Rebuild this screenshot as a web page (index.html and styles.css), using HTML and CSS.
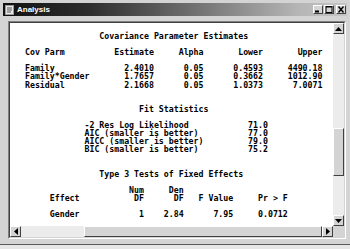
FILE: index.html
```html
<!DOCTYPE html>
<html lang="en">
<head>
  <meta charset="UTF-8" />
  <meta name="viewport" content="width=device-width, initial-scale=1.0" />
  <title>Analysis</title>

  <link rel="stylesheet" href="styles.css">

</head>

<body>
    <div class="window">
        <div class="titlebar">
            <svg class="app-icon" width="9" height="10" viewBox="0 0 9 10">
                <rect x="0.5" y="0.5" width="8" height="9" fill="#e8e8e8" stroke="#9a9a9a"/>
                <path d="M2 3h5M2 5h5M2 7h4" stroke="#555" stroke-width="1"/>
            </svg>
            <span class="title">Analysis</span>
            <div class="controls">
                <span class="ctl"><svg width="8" height="7" viewBox="0 0 8 7"><path d="M1 5.5h4" stroke="#000" stroke-width="2"/></svg></span>
                <span class="ctl"><svg width="8" height="7" viewBox="0 0 8 7"><rect x="1" y="0.5" width="6" height="6" fill="none" stroke="#000"/><path d="M1 1h6" stroke="#000" stroke-width="1"/></svg></span>
                <span class="ctl ctl-close"><svg width="8" height="7" viewBox="0 0 8 7"><path d="M1.5 0.5l5 6M6.5 0.5l-5 6" stroke="#000" stroke-width="1.4"/></svg></span>
            </div>
        </div>

        <div class="frame">
            <div class="well">
                <div class="content">
<pre class="listing">               Covariance Parameter Estimates

Cov Parm          Estimate     Alpha       Lower       Upper

Family              2.4010      0.05      0.4593     4490.18
Family*Gender       1.7657      0.05      0.3662     1012.90
Residual            2.1668      0.05      1.0373      7.0071


                       Fit Statistics

            -2 Res Log Likelihood            71.0
            AIC (smaller is better)          77.0
            AICC (smaller is better)         79.0
            BIC (smaller is better)          75.2


               Type 3 Tests of Fixed Effects

                     Num     Den
     Effect           DF      DF   F Value     Pr > F

     Gender            1    2.84      7.95     0.0712</pre>
                </div>

                <div class="vscroll">
                    <span class="sbtn"><svg width="7" height="4" viewBox="0 0 7 4"><path d="M3.5 0L7 4H0z" fill="#000"/></svg></span>
                    <div class="vtrack-top"></div>
                    <div class="vthumb"></div>
                    <div class="vtrack-rest"></div>
                    <span class="sbtn"><svg width="7" height="4" viewBox="0 0 7 4"><path d="M0 0h7L3.5 4z" fill="#000"/></svg></span>
                </div>

                <div class="hscroll">
                    <span class="sbtn"><svg width="4" height="7" viewBox="0 0 4 7"><path d="M0 3.5L4 0v7z" fill="#000"/></svg></span>
                    <div class="htrack-left"></div>
                    <div class="hthumb"></div>
                    <span class="sbtn"><svg width="4" height="7" viewBox="0 0 4 7"><path d="M0 0l4 3.5L0 7z" fill="#000"/></svg></span>
                </div>

                <div class="corner"></div>
            </div>
        </div>
    </div>
</body>
</html>
```

FILE: styles.css
```css
body {
  margin: 0;
  background-color: #e6e6e6;
  width: 350px;
  height: 249px;
  overflow: hidden;
}
.window {
  width: 350px;
  height: 245px;
  box-sizing: border-box;
  background: #d4d4d4;
  padding: 3px 3px 0 3px;
  border-bottom: 1px solid #5a5a5a;
}
.titlebar {
  height: 13px;
  display: flex;
  align-items: center;
  padding-left: 2px;
  background: linear-gradient(to right, #111 0%, #2e2e2e 25%, #7a7a7a 60%, #b4b4b4 85%, #c6c6c6 100%);
}
.app-icon {
  margin-right: 3px;
}
.title {
  font-family: "Liberation Sans", Arial, sans-serif;
  font-weight: bold;
  font-size: 8px;
  color: #fff;
}
.controls {
  margin-left: auto;
  display: flex;
  gap: 1px;
  padding-right: 1px;
}
.ctl {
  width: 10px;
  height: 9px;
  box-sizing: border-box;
  background: #d4d4d4;
  border: 1px solid;
  border-color: #fff #404040 #404040 #fff;
  display: flex;
  align-items: center;
  justify-content: center;
}
.ctl-close {
  margin-left: 1px;
}
.frame {
  margin: 5px 1px 0 5px;
  height: 218px;
  box-sizing: border-box;
  border: 1px solid;
  border-color: #808080 #fff #fff #808080;
}
.well {
  height: 100%;
  box-sizing: border-box;
  border: 1px solid;
  border-color: #404040 #d4d4d4 #d4d4d4 #404040;
  display: grid;
  grid-template-columns: 1fr 11px;
  grid-template-rows: 1fr 11px;
}
.content {
  background: #fff;
  padding: 9px 0 0 15px;
  overflow: hidden;
}
.listing {
  margin: 0;
  font-family: "DejaVu Sans Mono", "Liberation Mono", monospace;
  font-weight: bold;
  font-size: 8.24px;
  line-height: 8.1px;
  color: #000;
}
.vscroll {
  display: flex;
  flex-direction: column;
  background: #ececec;
}
.sbtn {
  width: 11px;
  height: 11px;
  flex: none;
  box-sizing: border-box;
  background: #d4d4d4;
  border: 1px solid;
  border-color: #fff #404040 #404040 #fff;
  display: flex;
  align-items: center;
  justify-content: center;
}
.vtrack-top {
  height: 94px;
}
.vthumb {
  height: 48px;
  background: #d4d4d4;
  border: 1px solid;
  border-color: #fff #404040 #404040 #fff;
  box-sizing: border-box;
}
.vtrack-rest {
  flex: 1;
}
.hscroll {
  display: flex;
  background: #ececec;
}
.htrack-left {
  width: 63px;
}
.hthumb {
  flex: 1;
  background: #d4d4d4;
  border: 1px solid;
  border-color: #fff #404040 #404040 #fff;
  box-sizing: border-box;
}
.corner {
  background: #d4d4d4;
}
```
